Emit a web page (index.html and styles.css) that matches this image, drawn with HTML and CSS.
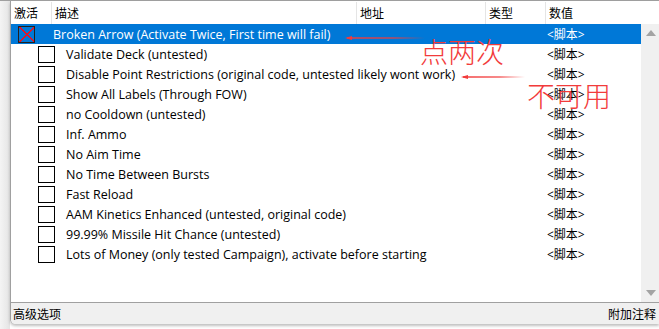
FILE: index.html
```html
<!DOCTYPE html>
<html>
<head>
    <title>Cheat Table</title>
    <link rel="stylesheet" href="styles.css">
</head>
<body>
    <div class="window">
        <div class="gutter"></div>
        <div class="panel">
            <div class="header">
                <div class="hcell">激活</div>
                <div class="hcell">描述</div>
                <div class="hcell">地址</div>
                <div class="hcell">类型</div>
                <div class="hcell">数值</div>
            </div>
            <div class="body">
                <div class="rows">
                    <div class="row selected">
                        <div class="desc top"><span class="box crossed"></span><span class="label">Broken Arrow (Activate Twice, First time will fail)</span></div>
                        <div class="value">&lt;脚本&gt;</div>
                    </div>
                    <div class="row">
                        <div class="desc child"><span class="box"></span><span class="label">Validate Deck (untested)</span></div>
                        <div class="value">&lt;脚本&gt;</div>
                    </div>
                    <div class="row">
                        <div class="desc child"><span class="box"></span><span class="label">Disable Point Restrictions (original code, untested likely wont work)</span></div>
                        <div class="value">&lt;脚本&gt;</div>
                    </div>
                    <div class="row">
                        <div class="desc child"><span class="box"></span><span class="label">Show All Labels (Through FOW)</span></div>
                        <div class="value">&lt;脚本&gt;</div>
                    </div>
                    <div class="row">
                        <div class="desc child"><span class="box"></span><span class="label">no Cooldown (untested)</span></div>
                        <div class="value">&lt;脚本&gt;</div>
                    </div>
                    <div class="row">
                        <div class="desc child"><span class="box"></span><span class="label">Inf. Ammo</span></div>
                        <div class="value">&lt;脚本&gt;</div>
                    </div>
                    <div class="row">
                        <div class="desc child"><span class="box"></span><span class="label">No Aim Time</span></div>
                        <div class="value">&lt;脚本&gt;</div>
                    </div>
                    <div class="row">
                        <div class="desc child"><span class="box"></span><span class="label">No Time Between Bursts</span></div>
                        <div class="value">&lt;脚本&gt;</div>
                    </div>
                    <div class="row">
                        <div class="desc child"><span class="box"></span><span class="label">Fast Reload</span></div>
                        <div class="value">&lt;脚本&gt;</div>
                    </div>
                    <div class="row">
                        <div class="desc child"><span class="box"></span><span class="label">AAM Kinetics Enhanced (untested, original code)</span></div>
                        <div class="value">&lt;脚本&gt;</div>
                    </div>
                    <div class="row">
                        <div class="desc child"><span class="box"></span><span class="label">99.99% Missile Hit Chance (untested)</span></div>
                        <div class="value">&lt;脚本&gt;</div>
                    </div>
                    <div class="row">
                        <div class="desc child"><span class="box"></span><span class="label">Lots of Money (only tested Campaign), activate before starting</span></div>
                        <div class="value">&lt;脚本&gt;</div>
                    </div>
                </div>
                <div class="scrollbar">
                    <span class="arrow up"></span>
                    <span class="arrow down"></span>
                </div>
            </div>
            <div class="status">
                <span>高级选项</span>
                <span>附加注释</span>
            </div>
        </div>

        <!-- annotations drawn over the list -->
        <svg class="mark mark-1" width="80" height="6" viewBox="0 0 80 6">
            <defs>
                <linearGradient id="fade1" gradientUnits="userSpaceOnUse" x1="0" y1="0" x2="80" y2="0">
                    <stop offset="0" stop-color="#f23b3b"/>
                    <stop offset="0.6" stop-color="#f23b3b" stop-opacity="0.8"/>
                    <stop offset="1" stop-color="#f23b3b" stop-opacity="0"/>
                </linearGradient>
            </defs>
            <path d="M2 3 L80 3" stroke="url(#fade1)" stroke-width="1.5"/>
            <path d="M0 3 L7 1 L7 5 Z" fill="#f23b3b"/>
        </svg>
        <div class="note note-1">点两次</div>
        <svg class="mark mark-2" width="64" height="6" viewBox="0 0 64 6">
            <defs>
                <linearGradient id="fade2" gradientUnits="userSpaceOnUse" x1="0" y1="0" x2="64" y2="0">
                    <stop offset="0" stop-color="#f23b3b"/>
                    <stop offset="0.6" stop-color="#f23b3b" stop-opacity="0.8"/>
                    <stop offset="1" stop-color="#f23b3b" stop-opacity="0"/>
                </linearGradient>
            </defs>
            <path d="M2 3 L64 3" stroke="url(#fade2)" stroke-width="1.5"/>
            <path d="M0 3 L7 1 L7 5 Z" fill="#f23b3b"/>
        </svg>
        <div class="note note-2">不可用</div>
    </div>
</body>
</html>
```

FILE: styles.css
```css
body { margin: 0; background: #fff; font-family: "Open Sans", "Noto Sans CJK SC", sans-serif; font-size: 12.5px; color: #000; }
.window { position: relative; display: flex; width: 659px; height: 329px; border-top: 1px solid #a0a0a0; box-sizing: border-box; }
.gutter { width: 10px; background: linear-gradient(to right, #f4f4f4, #e4e4e4); }
.panel { flex: 1; display: flex; flex-direction: column; height: 323px; border-left: 1px solid #a0a0a0; border-bottom-left-radius: 5px; box-shadow: 0 2px 3px rgba(0,0,0,0.25); overflow: hidden; }

.header { display: grid; grid-template-columns: 40px 305px 129px 60px 1fr; height: 22px; margin-top: 1px; background: #fff; }
.hcell { font-family: "Noto Sans CJK SC", sans-serif; font-size: 12px; line-height: 22px; padding-left: 3px; border-left: 1px solid #e5e5e5; }
.hcell:first-child { border-left: none; }

.body { flex: 1; display: flex; background: #fff; }
.rows { width: 630px; }
.row { display: flex; height: 20px; align-items: center; }
.row.selected { background: #0078d7; color: #fff; }
.desc { width: 534px; box-sizing: border-box; display: flex; align-items: center; white-space: nowrap; }
.desc.top { padding-left: 7px; }
.desc.child { padding-left: 27px; }
.box { width: 17px; height: 17px; box-sizing: border-box; border: 1px solid #000; background: #fff; flex: none; }
.box.crossed { background: linear-gradient(to top right, transparent 48%, #e81123 48%, #e81123 54%, transparent 54%), linear-gradient(to bottom right, transparent 48%, #e81123 48%, #e81123 54%, transparent 54%); border-color: #202020; }
.desc.top .label { margin-left: 18px; }
.desc.child .label { margin-left: 11px; }
.value { padding-left: 2px; font-family: "Open Sans", "Noto Sans CJK SC", sans-serif; font-size: 12px; }

.scrollbar { flex: 1; position: relative; background: #f0f0f0; }
.arrow { position: absolute; left: 5px; width: 0; height: 0; border-left: 5px solid transparent; border-right: 5px solid transparent; }
.arrow.up { top: 6px; border-bottom: 6px solid #a3a3a3; }
.arrow.down { bottom: 6px; border-top: 6px solid #a3a3a3; }

.status { display: flex; justify-content: space-between; height: 21px; align-items: center; padding: 0 3px 0 2px; background: #f0f0f0; border-top: 1px solid #a0a0a0; font-family: "Noto Sans CJK SC", sans-serif; font-size: 12px; }

.mark { position: absolute; }
.mark-1 { left: 345px; top: 34px; }
.mark-2 { left: 461px; top: 73px; }
.note { position: absolute; font-family: "Noto Sans CJK SC", sans-serif; font-size: 28px; font-weight: 300; line-height: 30px; color: #f23b3b; }
.note-1 { left: 420px; top: 35px; }
.note-2 { left: 527px; top: 79px; }
```
